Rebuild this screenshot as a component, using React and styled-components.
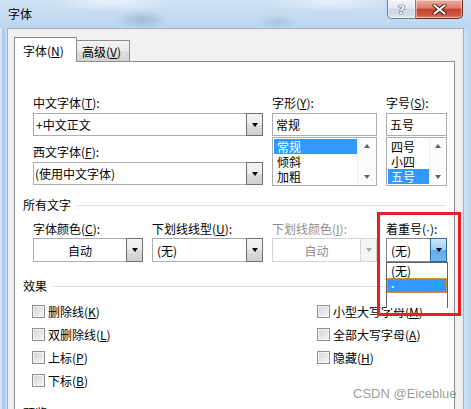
import React from 'react';
import styled, { createGlobalStyle } from 'styled-components';

const GlobalStyle = createGlobalStyle`
  html, body { margin: 0; padding: 0; }
  body {
    font-family: "Noto Sans CJK SC", "Noto Sans", sans-serif;
    font-size: 12px;
    color: #000;
  }
`;

const Window = styled.div`
  position: relative;
  width: 471px;
  height: 409px;
  overflow: hidden;
  display: flex;
  flex-direction: column;
  background: linear-gradient(90deg, #d6e6f6 0, #d6e6f6 2px, #a9c8e9 2px, #b3cfec 5px, #d2e3f4 7px, #c9ddf2 50%, #d2e3f4 calc(100% - 8px), #c4daf0 calc(100% - 4px), #b9d3ee 100%);
`;

const TitleBar = styled.div`
  height: 28px;
  flex: none;
  display: flex;
  justify-content: space-between;
  align-items: flex-start;
  background:
    radial-gradient(ellipse 26px 10px at 142px 20px, rgba(120, 150, 185, 0.45), transparent),
    radial-gradient(ellipse 20px 8px at 278px 22px, rgba(130, 160, 195, 0.35), transparent),
    radial-gradient(ellipse 60px 10px at 110px 2px, rgba(255, 255, 255, 0.55), transparent),
    radial-gradient(ellipse 60px 10px at 330px 2px, rgba(255, 255, 255, 0.5), transparent),
    linear-gradient(#cfe2f5, #bcd6ef);
`;

const Title = styled.div`
  padding-left: 8px;
  line-height: 28px;
`;

const Controls = styled.div`
  display: flex;
  margin-right: 8px;
`;

const CtrlButton = styled.div`
  box-sizing: border-box;
  width: ${p => p.$w}px;
  height: 19px;
  display: flex;
  align-items: center;
  justify-content: center;
  border: 1px solid ${p => (p.$close ? '#6a2a25' : '#6f7f96')};
  border-top: none;
  border-left: ${p => (p.$close ? 'none' : '1px solid #6f7f96')};
  border-radius: ${p => (p.$close ? '0 0 5px 0' : '0 0 0 5px')};
  background: ${p =>
    p.$close
      ? 'linear-gradient(#e9aca2, #dd7c6b 45%, #c53f2d 52%, #cf5a44 85%, #e0866c)'
      : 'linear-gradient(#f1f5fa, #e2e9f2 45%, #cbd6e3 52%, #d4dde8 85%, #e4ebf3)'};
  box-shadow: inset 0 0 0 1px rgba(255, 255, 255, 0.45);
`;

const HelpGlyph = styled.span`
  font-family: "DejaVu Sans", sans-serif;
  font-weight: bold;
  font-size: 13px;
  line-height: 1;
  color: #f4f6f9;
  text-shadow: 0 0 1px #3c4656, 0 0 1px #3c4656, 0 0 1px #3c4656;
`;

const Body = styled.div`
  flex: 1;
  display: flex;
  flex-direction: column;
  margin: 0 7px;
  padding: 8px 8px 0 6px;
  background: #f0f0f0;
  border: 1px solid #a3afbd;
  border-bottom: none;
  min-height: 0;
`;

const TabRow = styled.div`
  height: 24px;
  flex: none;
  display: flex;
  align-items: flex-end;
`;

const Tab = styled.div`
  box-sizing: border-box;
  position: relative;
  z-index: ${p => (p.$active ? 1 : 0)};
  width: ${p => (p.$active ? 63 : 53)}px;
  height: ${p => (p.$active ? 25 : 21)}px;
  margin-bottom: ${p => (p.$active ? -1 : 0)}px;
  display: flex;
  align-items: center;
  padding-left: ${p => (p.$active ? 8 : 5)}px;
  border: 1px solid #898c95;
  border-bottom: none;
  border-left: ${p => (p.$active ? '1px solid #898c95' : 'none')};
  background: ${p => (p.$active ? '#fff' : 'linear-gradient(#f3f3f3, #ebebeb 50%, #dedede 50%, #d3d3d3)')};
  white-space: nowrap;
`;

const Panel = styled.div`
  flex: 1;
  background: #fff;
  border: 1px solid #898c95;
  padding: 33px 8px 0 8px;
`;

const TopGrid = styled.div`
  display: grid;
  grid-template-columns: 230px 105px 61px;
  column-gap: 9px;
  margin-left: 10px;
`;

const FontRow = styled.div`
  display: grid;
  grid-template-columns: 110px 111px 105px 61px;
  column-gap: 9px;
  margin: 8px 0 0 10px;
`;

const Column = styled.div`
  display: flex;
  flex-direction: column;
`;

const Label = styled.div`
  height: 16px;
  line-height: 16px;
  white-space: nowrap;
  margin-top: ${p => p.$mt || 0}px;
  margin-bottom: ${p => (p.$mb === undefined ? 2 : p.$mb)}px;
  color: ${p => (p.$disabled ? '#8d8d8d' : '#000')};
`;

const Acc = styled.span`
  text-decoration: underline;
  text-underline-offset: 1px;
`;

const Dot = styled.span`
  font-family: "Liberation Sans", Arial, sans-serif;
  font-weight: ${p => (p.$bold ? 'bold' : 'normal')};
`;

const ComboWrap = styled.div`
  position: relative;
`;

const Combo = styled.div`
  box-sizing: border-box;
  height: ${p => p.$h || 23}px;
  display: flex;
  border: 1px solid ${p => (p.$disabled ? '#d2d4d8' : p.$focus ? '#7c8590' : '#abadb3')};
  background: #fff;
  color: ${p => (p.$disabled ? '#8d8d8d' : '#000')};
`;

const ComboValue = styled.div`
  flex: 1;
  display: flex;
  align-items: center;
  justify-content: ${p => (p.$center ? 'center' : 'flex-start')};
  padding-left: ${p => (p.$center ? 0 : p.$pad || 2)}px;
  white-space: nowrap;
  overflow: hidden;
`;

const DropButton = styled.div`
  box-sizing: border-box;
  width: 17px;
  margin: -1px -1px -1px 0;
  display: flex;
  align-items: center;
  justify-content: center;
  border: 1px solid ${p => (p.$focus ? '#2d6a9a' : p.$disabled ? '#d5d5d5' : '#707070')};
  background: ${p =>
    p.$focus
      ? 'linear-gradient(#cfe9fb, #97cdf3 50%, #5eaae7 52%, #75b9ec)'
      : p.$disabled
      ? '#f4f4f4'
      : 'linear-gradient(#f3f3f3, #ebebeb 50%, #dddddd 52%, #cfcfcf)'};
`;

const Caret = styled.span`
  width: 0;
  height: 0;
  border-left: 3px solid transparent;
  border-right: 3px solid transparent;
  border-top: ${p => (p.$up ? 0 : 4)}px solid ${p => p.$color || '#000'};
  border-bottom: ${p => (p.$up ? 4 : 0)}px solid ${p => p.$color || '#000'};
`;

const TextBox = styled.div`
  box-sizing: border-box;
  height: 23px;
  display: flex;
  align-items: center;
  padding-left: 3px;
  border: 1px solid #abadb3;
`;

const ListBox = styled.div`
  box-sizing: border-box;
  height: 49px;
  display: flex;
  border: 1px solid #abadb3;
  margin-top: 1px;
`;

const ListItems = styled.div`
  flex: 1;
  padding: 1px 0 0 1px;
`;

const ListItem = styled.div`
  height: 15px;
  line-height: 15px;
  padding-left: 3px;
  background: ${p => (p.$selected ? '#3399ff' : 'transparent')};
  color: ${p => (p.$selected ? '#fff' : '#000')};
  white-space: nowrap;
`;

const ScrollBar = styled.div`
  width: ${p => p.$w}px;
  display: flex;
  flex-direction: column;
  justify-content: space-between;
  background: #fbfbfb;
  border-left: 1px solid #f0f0f0;
`;

const ScrollArrow = styled.div`
  height: 16px;
  display: flex;
  align-items: center;
  justify-content: center;
`;

const Section = styled.div`
  display: flex;
  align-items: center;
  gap: 6px;
  height: 16px;
  line-height: 16px;
  margin-top: ${p => p.$mt}px;
  &::after {
    content: '';
    flex: 1;
    height: 1px;
    background: #d8dfe6;
  }
`;

const DropList = styled.div`
  position: absolute;
  z-index: 2;
  top: 100%;
  left: 0;
  right: -1px;
  box-sizing: border-box;
  height: 46px;
  border: 1px solid #646464;
  background: #fff;
`;

const DropItem = styled.div`
  box-sizing: border-box;
  height: 15px;
  line-height: 13px;
  padding-left: 3px;
  background: ${p => (p.$selected ? '#3399ff' : '#fff')};
  color: ${p => (p.$selected ? '#fff' : '#000')};
  border: 1px ${p => (p.$selected ? 'dotted #e0a44a' : 'solid transparent')};
`;

const EffectsGrid = styled.div`
  display: grid;
  grid-template-columns: 285px 1fr;
  grid-template-rows: repeat(4, 23px);
  grid-auto-flow: column;
  margin: 6px 0 0 9px;
`;

const Check = styled.div`
  display: flex;
  align-items: center;
  gap: 3px;
  white-space: nowrap;
`;

const CheckBox = styled.span`
  box-sizing: border-box;
  width: 13px;
  height: 13px;
  border: 1px solid #8e8f8f;
  background: linear-gradient(135deg, #d4d4d4, #f6f6f6);
  box-shadow: inset 0 0 0 1px #f4f4f4;
`;

const Annotation = styled.div`
  position: absolute;
  z-index: 5;
  left: 377px;
  top: 212px;
  width: 84px;
  height: 104px;
  box-sizing: border-box;
  border: 3px solid #e81d25;
`;

const Watermark = styled.div`
  position: absolute;
  z-index: 6;
  left: 353px;
  top: 386px;
  font-family: "Liberation Sans", Arial, sans-serif;
  font-size: 13px;
  line-height: 16px;
  color: rgba(110, 110, 110, 0.7);
  white-space: nowrap;
`;

const CloseIcon = () => (
  <svg width="15" height="11" viewBox="0 0 15 11">
    <path d="M2.5 1.5 L12.5 9.5 M12.5 1.5 L2.5 9.5" stroke="#4a1a14" strokeWidth="4" strokeLinecap="round" />
    <path d="M2.5 1.5 L12.5 9.5 M12.5 1.5 L2.5 9.5" stroke="#ffffff" strokeWidth="2.2" strokeLinecap="round" />
  </svg>
);

const Drop = ({ focus, disabled }) => (
  <DropButton $focus={focus} $disabled={disabled}>
    <Caret $color={disabled ? '#a8a8a8' : '#000'} />
  </DropButton>
);

const List = ({ items, selected, bar }) => (
  <ListBox>
    <ListItems>
      {items.map(t => (
        <ListItem key={t} $selected={t === selected}>{t}</ListItem>
      ))}
    </ListItems>
    <ScrollBar $w={bar}>
      <ScrollArrow><Caret $up $color="#606060" /></ScrollArrow>
      <ScrollArrow><Caret $color="#606060" /></ScrollArrow>
    </ScrollBar>
  </ListBox>
);

const leftChecks = [
  ['删除线', 'K'],
  ['双删除线', 'L'],
  ['上标', 'P'],
  ['下标', 'B'],
];
const rightChecks = [
  ['小型大写字母', 'M'],
  ['全部大写字母', 'A'],
  ['隐藏', 'H'],
];

export default function App() {
  return (
    <Window>
      <GlobalStyle />
      <TitleBar>
        <Title>字体</Title>
        <Controls>
          <CtrlButton $w={29}><HelpGlyph>?</HelpGlyph></CtrlButton>
          <CtrlButton $w={47} $close><CloseIcon /></CtrlButton>
        </Controls>
      </TitleBar>
      <Body>
        <TabRow>
          <Tab $active>字体(<Acc>N</Acc>)</Tab>
          <Tab>高级(<Acc>V</Acc>)</Tab>
        </TabRow>
        <Panel>
          <TopGrid>
            <Column>
              <Label>中文字体(<Acc>T</Acc>):</Label>
              <Combo>
                <ComboValue $pad={2}>+中文正文</ComboValue>
                <Drop />
              </Combo>
              <Label $mt={8}>西文字体(<Acc>F</Acc>):</Label>
              <Combo>
                <ComboValue $pad={1}>(使用中文字体)</ComboValue>
                <Drop />
              </Combo>
            </Column>
            <Column>
              <Label>字形(<Acc>Y</Acc>):</Label>
              <TextBox>常规</TextBox>
              <List items={['常规', '倾斜', '加粗']} selected="常规" bar={18} />
            </Column>
            <Column>
              <Label>字号(<Acc>S</Acc>):</Label>
              <TextBox>五号</TextBox>
              <List items={['四号', '小四', '五号']} selected="五号" bar={16} />
            </Column>
          </TopGrid>

          <Section $mt={11}>所有文字</Section>
          <FontRow>
            <Column>
              <Label $mb={1}>字体颜色(<Acc>C</Acc>):</Label>
              <Combo $h={24}>
                <ComboValue $center>自动</ComboValue>
                <Drop />
              </Combo>
            </Column>
            <Column>
              <Label $mb={1}>下划线线型(<Acc>U</Acc>):</Label>
              <Combo $h={24}>
                <ComboValue $pad={4}>(无)</ComboValue>
                <Drop />
              </Combo>
            </Column>
            <Column>
              <Label $mb={1} $disabled>下划线颜色(<Acc>I</Acc>):</Label>
              <Combo $h={24} $disabled>
                <ComboValue $center>自动</ComboValue>
                <Drop disabled />
              </Combo>
            </Column>
            <Column>
              <Label $mb={1}>着重号(<Dot>·</Dot>):</Label>
              <ComboWrap>
                <Combo $h={24} $focus>
                  <ComboValue $pad={4}>(无)</ComboValue>
                  <Drop focus />
                </Combo>
                <DropList>
                  <DropItem>(无)</DropItem>
                  <DropItem $selected><Dot $bold>·</Dot></DropItem>
                  <DropItem />
                </DropList>
              </ComboWrap>
            </Column>
          </FontRow>

          <Section $mt={16}>效果</Section>
          <EffectsGrid>
            {[...leftChecks, ...rightChecks].map(([t, k]) => (
              <Check key={t}>
                <CheckBox />
                <span>{t}(<Acc>{k}</Acc>)</span>
              </Check>
            ))}
          </EffectsGrid>

          <Section $mt={13}>预览</Section>
        </Panel>
      </Body>
      <Annotation />
      <Watermark>CSDN @Eiceblue</Watermark>
    </Window>
  );
}
